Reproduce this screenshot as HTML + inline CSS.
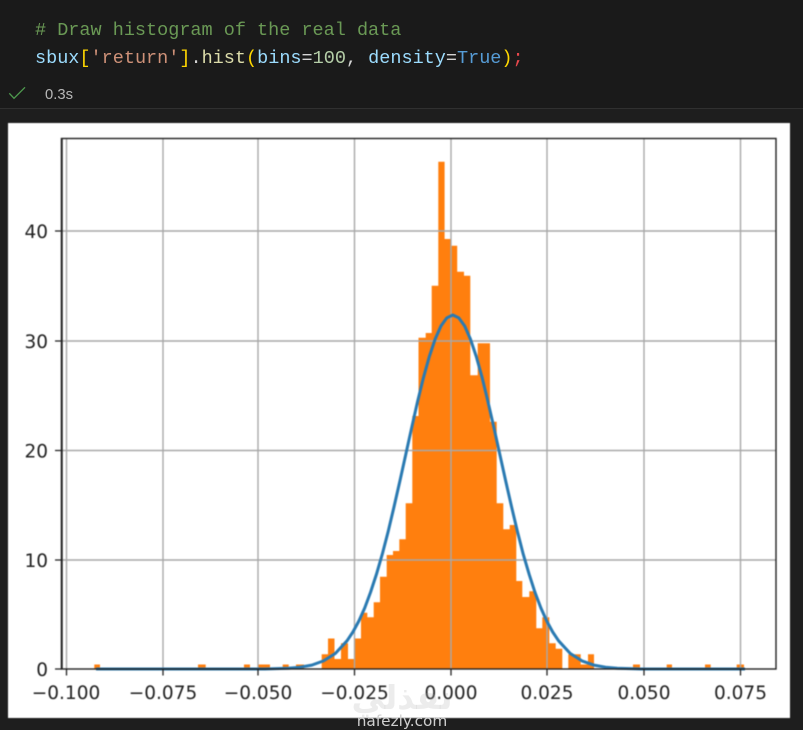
<!DOCTYPE html>
<html>
<head>
<meta charset="utf-8">
<style>
html,body{margin:0;padding:0;background:#1e1e1e;}
#r{position:relative;width:803px;height:730px;overflow:hidden;background:#1e1e1e;}
#top{position:absolute;left:0;top:0;width:803px;height:108px;background:#1a1a1a;}
#div{position:absolute;left:0;top:108px;width:803px;height:1px;background:#303030;}
.c{position:absolute;left:35px;font:18.5px/24px "Liberation Mono",monospace;white-space:pre;color:#d4d4d4;filter:blur(.25px);}
#t{position:absolute;left:45px;top:86px;font:14.8px/18px "Liberation Sans",sans-serif;color:#b8b8b8;}
#ck{position:absolute;left:0;top:80px;}
#plot{position:absolute;left:0;top:0;filter:blur(.4px);}
text{font-family:"DejaVu Sans",sans-serif;font-size:18.5px;fill:#222;}
#nz{position:absolute;left:340px;top:714px;width:124px;text-align:center;font:15.3px/15px "DejaVu Sans",sans-serif;color:#cfcfcf;}
#ar{position:absolute;left:340px;top:676px;width:124px;text-align:center;font:bold 33px/44px "DejaVu Sans","Noto Sans CJK SC",sans-serif;color:rgba(170,170,170,.22);}
</style>
</head>
<body>
<div id="r">
<div id="top"></div>
<div id="div"></div>
<div class="c" style="top:19px;color:#6a9955"># Draw histogram of the real data</div>
<div class="c" style="top:47px"><span style="color:#9cdcfe">sbux</span><span style="color:#ffd700">[</span><span style="color:#ce9178">'return'</span><span style="color:#ffd700">]</span>.<span style="color:#dcdcaa">hist</span><span style="color:#ffd700">(</span><span style="color:#9cdcfe">bins</span>=<span style="color:#b5cea8">100</span>, <span style="color:#9cdcfe">density</span>=<span style="color:#569cd6">True</span><span style="color:#ffd700">)</span><span style="color:#e8484d">;</span></div>
<svg id="ck" width="30" height="24" viewBox="0 80 30 24"><path d="M9.3 93.3L14 98.3L25 87.3" fill="none" stroke="#4e9a4e" stroke-width="1.3"/></svg>
<div id="t">0.3s</div>

<svg id="plot" width="803" height="730" viewBox="0 0 803 730">
<rect x="8" y="123" width="782" height="595" fill="#fff"/>
<path fill="#ff7f0e" d="
M94.3 664.5H100V669H94.3Z
M198 664.5H205.7V669H198Z
M244 664.5H250V669H244Z
M258 664.5H270V669H258Z
M282.7 664.5H288.7V669H282.7Z
M296 664.5H304V669H296Z
M321.7 654.3H328V669H321.7Z
M328 638.5H334.5V669H328Z
M334.5 659H341V669H334.5Z
M341 643.3H348V669H341Z
M348 659H354.3V669H348Z
M354.3 638.5H361V669H354.3Z
M361 612.7H367.3V669H361Z
M367.3 617.3H373.7V669H367.3Z
M373.7 602.3H380V669H373.7Z
M380 576.7H386.7V669H380Z
M386.7 555H393V669H386.7Z
M393 551H399.3V669H393Z
M399.3 539.3H405.7V669H399.3Z
M405.7 503.3H412.3V669H405.7Z
M412.3 416H418.5V669H412.3Z
M418.5 337.7H425.7V669H418.5Z
M425.7 333H431.7V669H425.7Z
M431.7 285.7H438.3V669H431.7Z
M438.3 161.7H444.6V669H438.3Z
M444.6 239H450.7V669H444.6Z
M450.7 245.7H457.2V669H450.7Z
M457.2 271.7H464V669H457.2Z
M464 275.7H470.3V669H464Z
M470.3 375.3H477.7V669H470.3Z
M477.7 343.3H490V669H477.7Z
M490 421.7H496.7V669H490Z
M496.7 503.3H503.3V669H496.7Z
M503.3 529.3H509.7V669H503.3Z
M509.7 525H516.3V669H509.7Z
M516.3 581H522.3V669H516.3Z
M522.3 597H529.3V669H522.3Z
M529.3 591.3H536.3V669H529.3Z
M536.3 628.3H542.3V669H536.3Z
M542.3 617.3H549.3V669H542.3Z
M549.3 643.3H555.7V669H549.3Z
M555.7 648.7H562.3V669H555.7Z
M568.3 654.3H580.7V669H568.3Z
M580.7 664.5H588V669H580.7Z
M588 654.3H594V669H588Z
M633 664.5H640V669H633Z
M666.7 664.5H672V669H666.7Z
M705 664.5H710.7V669H705Z
M736.7 664.5H744V669H736.7Z"/>
<path stroke="#a8a8a8" stroke-width="1.4" fill="none" d="M66.5 138V669M163 138V669M258 138V669M354.5 138V669M451 138V669M547 138V669M644 138V669M740.5 138V669M62 560H776M62 450.5H776M62 341H776M62 231H776"/>
<polyline fill="none" stroke="#2a7ab2" stroke-width="3" stroke-linejoin="round" points="96,669 264.8,669 288.3,668.2 300,667.2 311.8,665.1 323.5,660.9 335.3,653.5 347,640.8 352.9,632 358.8,621.1 364.7,608 370.5,592.4 376.4,574.4 382.3,554.1 388.2,531.4 394,506.9 399.9,481 405.8,454.3 411.7,427.6 417.5,401.8 423.4,377.8 429.3,356.6 435.2,339 441,325.9 446.9,317.8 452.8,315 458.7,317.8 464.6,325.9 470.4,339 476.3,356.6 482.2,377.8 488,401.8 493.9,427.6 499.8,454.3 505.7,481 511.6,506.9 517.4,531.4 523.2,554.1 529.2,574.4 535,592.4 540.9,608 546.8,621.1 552.7,632 558.6,640.8 570.3,653.5 582,660.9 593.8,665.1 605.6,667.2 617.3,668.2 640.8,669 745,669"/>
<rect x="61.5" y="138.5" width="714.5" height="530.5" fill="none" stroke="#222" stroke-width="1.4"/>
<path d="M61.8 138V669" stroke="#222" stroke-width="1.9"/>
<path stroke="#222" stroke-width="1.3" fill="none" d="M66.5 669V675.5M163 669V675.5M258 669V675.5M354.5 669V675.5M451 669V675.5M547 669V675.5M644 669V675.5M740.5 669V675.5M55 669H61.5M55 560H61.5M55 450.5H61.5M55 341H61.5M55 231H61.5"/>
<g text-anchor="middle">
<text x="66" y="699">−0.100</text>
<text x="163" y="699">−0.075</text>
<text x="258" y="699">−0.050</text>
<text x="354.5" y="699">−0.025</text>
<text x="451" y="699">0.000</text>
<text x="547" y="699">0.025</text>
<text x="644" y="699">0.050</text>
<text x="740.5" y="699">0.075</text>
</g>
<g text-anchor="end">
<text x="48" y="676">0</text>
<text x="48" y="567">10</text>
<text x="48" y="457.5">20</text>
<text x="48" y="348">30</text>
<text x="48" y="238">40</text>
</g>
</svg>
<div id="ar">نفذلي</div>
<div id="nz">nafezly.com</div>
</div>
</body>
</html>
